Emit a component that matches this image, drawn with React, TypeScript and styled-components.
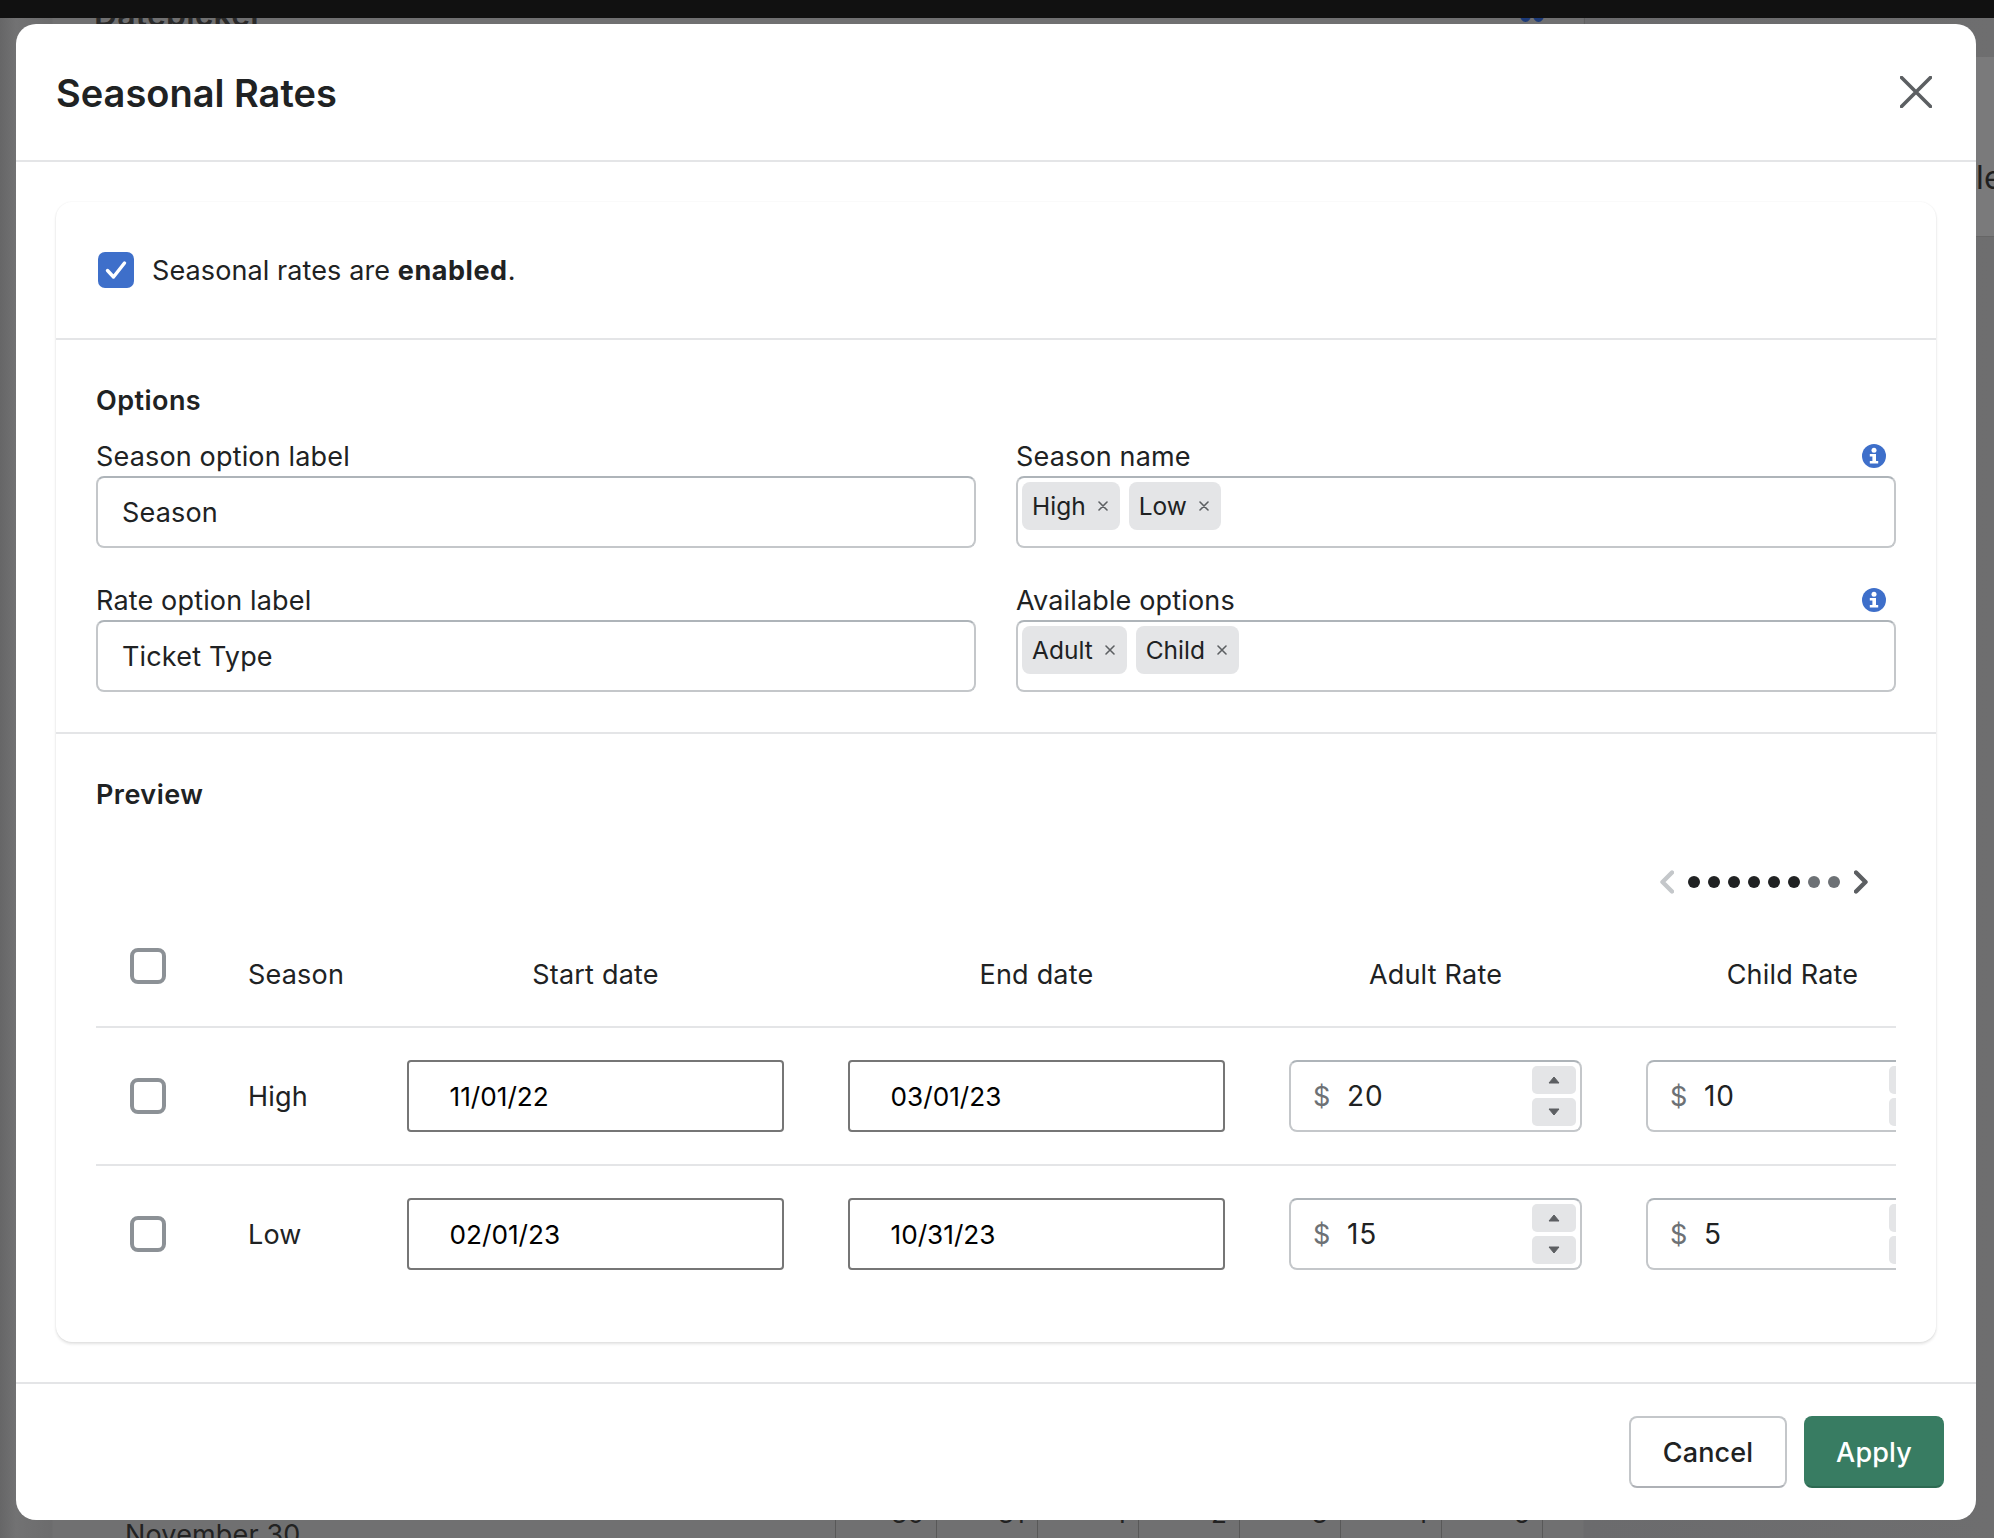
import React from "react";
import styled, { createGlobalStyle } from "styled-components";

const Global = createGlobalStyle`
  html, body { margin: 0; padding: 0; background: #6f6f70; }
  body { font-family: Inter, "Liberation Sans", sans-serif; color: #202223; letter-spacing: 0.16px; }
  * { box-sizing: border-box; }
`;

const Page = styled.div`
  width: 1994px;
  height: 1538px;
  display: flex;
  flex-direction: column;
  overflow: hidden;
`;
const TopBar = styled.div`
  height: 18px;
  background: #111111;
  position: relative;
  z-index: 3;
`;
const Stage = styled.div`
  flex: 1;
  min-height: 0;
  position: relative;
  display: flex;
  padding: 6px 18px 18px 16px;
  background: linear-gradient(90deg, #666667 0, #727273 16px, #6c6c6d 52px, #707071 53px, #707071 1583px, #6b6b6d 1584px, #6e6e6f 100%);
`;

/* Dimmed page behind the dialog */
const GhostHeading = styled.div`
  position: absolute;
  left: 94px;
  top: -23px;
  font-size: 32px;
  line-height: 40px;
  font-weight: 600;
  color: #2a2a2a;
`;
const GhostDots = styled.div`
  position: absolute;
  left: 1520px;
  top: -10px;
  display: flex;
  gap: 2px;
  & > i { width: 11px; height: 14px; border-radius: 50%; background: #1c3a78; display: block; }
`;
const GhostLine = styled.div`
  position: absolute;
  left: 1584px;
  top: 0;
  width: 1px;
  height: 6px;
  background: #606060;
`;
const GhostPanel = styled.div`
  position: absolute;
  right: 0;
  top: 39px;
  width: 18px;
  height: 180px;
  background: #7a7a7b;
  border-bottom: 1px solid #666;
  font-size: 32px;
  line-height: 38px;
  color: #1f1f1f;
  overflow: hidden;
  white-space: nowrap;
  padding-top: 102px;
`;
const GhostMonth = styled.div`
  position: absolute;
  left: 125px;
  top: 1500px;
  font-size: 27px;
  line-height: 34px;
  color: #222;
  white-space: nowrap;
`;
const GhostCalendar = styled.div`
  position: absolute;
  left: 835px;
  bottom: 0;
  height: 40px;
  display: flex;
  border-left: 1px solid #585858;
`;
const GhostDay = styled.div`
  width: 101px;
  height: 40px;
  border-right: 1px solid #585858;
  padding: 3px 12px 0 0;
  text-align: right;
  font-size: 26px;
  line-height: 26px;
  color: #222;
`;

/* Dialog */
const Modal = styled.div`
  position: relative;
  z-index: 1;
  flex: 1;
  display: flex;
  flex-direction: column;
  background: #fff;
  border-radius: 20px;
`;
const ModalHeader = styled.div`
  height: 138px;
  flex: none;
  display: flex;
  align-items: center;
  justify-content: space-between;
  padding: 0 44px 0 40px;
  border-bottom: 2px solid #e4e5e7;
`;
const Title = styled.h2`
  margin: 2px 0 0;
  font-size: 38px;
  line-height: 44px;
  font-weight: 600;
  letter-spacing: 0;
  color: #202223;
`;
const CloseButton = styled.div`
  width: 32px;
  height: 32px;
  margin-bottom: 1px;
  display: flex;
`;
const ModalBody = styled.div`
  flex: 1;
  padding: 40px;
`;
const Card = styled.div`
  height: 1140px;
  background: #fff;
  border-radius: 16px;
  box-shadow: 0 0 2px rgba(23, 24, 24, 0.07), 0 2px 3px rgba(23, 24, 24, 0.12);
  display: flex;
  flex-direction: column;
`;
const Section = styled.div<{ $h: number }>`
  height: ${(p) => p.$h}px;
  padding: 0 40px;
  flex: none;
  & + & { border-top: 2px solid #e4e5e7; }
`;
const EnableRow = styled.div`
  height: 136px;
  display: flex;
  align-items: center;
  gap: 18px;
  font-size: 27px;
  margin-left: 2px;
`;
const EnableText = styled.span`
  letter-spacing: 0.1px;
  & > b { letter-spacing: 0.55px; }
`;
const CheckOn = styled.div`
  width: 36px;
  height: 36px;
  border-radius: 7px;
  background: #3e6fca;
  display: flex;
  align-items: center;
  justify-content: center;
`;
const CheckOff = styled.div`
  width: 36px;
  height: 36px;
  border-radius: 8px;
  border: 4px solid #8c9196;
  background: #fff;
  margin-left: 34px;
`;
const SectionTitle = styled.div<{ $top: number }>`
  margin-top: ${(p) => p.$top}px;
  font-size: 27px;
  line-height: 32px;
  font-weight: 600;
  letter-spacing: 0.45px;
`;
const OptionsGrid = styled.div`
  display: grid;
  grid-template-columns: 880px 880px;
  column-gap: 40px;
  row-gap: 32px;
  margin-top: 19px;
`;
const Field = styled.div`
  display: flex;
  flex-direction: column;
`;
const FieldLabel = styled.div`
  height: 40px;
  display: flex;
  align-items: center;
  justify-content: space-between;
  font-size: 27px;
  padding-right: 10px;
`;
const TextBox = styled.div`
  height: 72px;
  border: 2px solid #c4c7ca;
  border-top-color: #aeb4b9;
  border-radius: 8px;
  display: flex;
  align-items: center;
  padding-left: 24px;
  font-size: 27px;
`;
const TagBox = styled(TextBox)`
  align-items: flex-start;
  padding: 4px 0 0 4px;
  gap: 9px;
`;
const Tag = styled.div`
  height: 48px;
  background: #e4e5e7;
  border-radius: 8px;
  display: flex;
  align-items: center;
  gap: 11px;
  padding: 0 11px 0 10px;
  font-size: 24.5px;
  letter-spacing: 0;
  color: #202223;
`;
const Pager = styled.div`
  height: 24px;
  margin: 59px 28px 0 0;
  display: flex;
  align-items: center;
  justify-content: flex-end;
  gap: 14px;
`;
const Dots = styled.div`
  display: flex;
  gap: 8px;
`;
const Dot = styled.div<{ $muted?: boolean }>`
  width: 12px;
  height: 12px;
  border-radius: 50%;
  background: ${(p) => (p.$muted ? "#6d7175" : "#202223")};
`;
const Scroller = styled.div`
  width: 1800px;
  overflow: hidden;
`;
const Row = styled.div<{ $h: number; $head?: boolean }>`
  display: grid;
  width: 1843px;
  grid-template-columns: 88px 95px 377px 377px 293px 293px;
  column-gap: 64px;
  height: ${(p) => p.$h}px;
  align-items: ${(p) => (p.$head ? "start" : "center")};
`;
const Rule = styled.div`
  height: 2px;
  background: #e4e5e7;
`;
const HeadCheck = styled(CheckOff)`
  margin-top: 54px;
`;
const RowCheck = styled(CheckOff)``;
const HeadCell = styled.div<{ $center?: boolean }>`
  margin-top: 64px;
  line-height: 34px;
  font-size: 27px;
  letter-spacing: 0.2px;
  text-align: ${(p) => (p.$center ? "center" : "left")};
`;
const Cell = styled.div`
  font-size: 27px;
`;
const DateBox = styled.div`
  height: 72px;
  border: 2px solid #767676;
  border-radius: 4px;
  display: flex;
  align-items: center;
  padding-left: 40.5px;
  font-size: 26.2px;
  letter-spacing: 0;
  color: #000;
`;
const MoneyBox = styled.div`
  height: 72px;
  border: 2px solid #c4c7ca;
  border-top-color: #aeb4b9;
  border-radius: 8px;
  display: flex;
  align-items: center;
  padding: 0 4px 0 22px;
  font-size: 27px;
`;
const Prefix = styled.span`
  color: #6d7175;
  width: 34px;
`;
const Amount = styled.span`
  flex: 1;
  font-size: 28px;
  letter-spacing: 0.8px;
`;
const Spinner = styled.div`
  width: 44px;
  display: flex;
  flex-direction: column;
  gap: 4px;
`;
const SpinButton = styled.div`
  height: 28px;
  background: #e4e5e7;
  border-radius: 5px;
  display: flex;
  align-items: center;
  justify-content: center;
`;
const ModalFooter = styled.div`
  flex: 1;
  border-top: 2px solid #e4e5e7;
  display: flex;
  justify-content: flex-end;
  gap: 17px;
  padding: 32px 32px 0 0;
`;
const Button = styled.div<{ $primary?: boolean }>`
  height: 72px;
  border-radius: 8px;
  display: flex;
  align-items: center;
  justify-content: center;
  font-size: 27px;
  font-weight: 500;
  width: ${(p) => (p.$primary ? 140 : 158)}px;
  background: ${(p) => (p.$primary ? "#387c62" : "#fff")};
  color: ${(p) => (p.$primary ? "#fff" : "#202223")};
  border: 2px solid ${(p) => (p.$primary ? "#387c62" : "#c4c7ca")};
  border-bottom-color: ${(p) => (p.$primary ? "#2d6a52" : "#aeb1b6")};
`;

const Check = () => (
  <svg width="24" height="24" viewBox="0 0 24 24" fill="none">
    <path d="M3.5 12.5 L9.5 19 L20.5 5" stroke="#fff" strokeWidth="3.4" strokeLinecap="round" strokeLinejoin="round" />
  </svg>
);
const Close = () => (
  <svg width="32" height="32" viewBox="0 0 32 32" fill="none">
    <path d="M1.5 1.5 L30.5 30.5 M30.5 1.5 L1.5 30.5" stroke="#5c5f62" strokeWidth="3.6" strokeLinecap="round" />
  </svg>
);
const Info = () => (
  <svg width="24" height="24" viewBox="0 0 24 24">
    <circle cx="12" cy="12" r="12" fill="#3e6fca" />
    <circle cx="12" cy="6.2" r="2.5" fill="#fff" />
    <path d="M7.8 10 H14 V17 H16.2 V19.6 H7.8 V17 H10.4 V12.6 H7.8 Z" fill="#fff" />
  </svg>
);
const TagX = () => (
  <svg width="12" height="12" viewBox="0 0 12 12" fill="none">
    <path d="M2 2 L10 10 M10 2 L2 10" stroke="#5c5f62" strokeWidth="1.6" strokeLinecap="round" />
  </svg>
);
const Chevron = ({ dir, color }: { dir: "l" | "r"; color: string }) => (
  <svg width="14" height="24" viewBox="0 0 14 24" fill="none">
    <path
      d={dir === "l" ? "M12 2.5 L2.5 12 L12 21.5" : "M2 2.5 L11.5 12 L2 21.5"}
      stroke={color}
      strokeWidth="4.4"
      strokeLinecap="round"
      strokeLinejoin="round"
    />
  </svg>
);
const Tri = ({ up }: { up?: boolean }) => (
  <svg width="12" height="8" viewBox="0 0 12 8">
    <path d={up ? "M6 1 L11 7 H1 Z" : "M6 7 L11 1 H1 Z"} fill="#5c5f62" stroke="#5c5f62" strokeLinejoin="round" />
  </svg>
);

const Money = ({ value }: { value: string }) => (
  <MoneyBox>
    <Prefix>$</Prefix>
    <Amount>{value}</Amount>
    <Spinner>
      <SpinButton><Tri up /></SpinButton>
      <SpinButton><Tri /></SpinButton>
    </Spinner>
  </MoneyBox>
);

const seasons = [
  { name: "High", start: "11/01/22", end: "03/01/23", adult: "20", child: "10" },
  { name: "Low", start: "02/01/23", end: "10/31/23", adult: "15", child: "5" },
];
const days = ["30", "31", "1", "2", "3", "4", "5"];

export default function App() {
  return (
    <Page>
      <Global />
      <TopBar />
      <Stage>
        <GhostHeading>Datepicker</GhostHeading>
        <GhostDots><i /><i /></GhostDots>
        <GhostLine />
        <GhostPanel>le</GhostPanel>
        <GhostMonth>November 30</GhostMonth>
        <GhostCalendar>
          {days.map((d) => <GhostDay key={d}>{d}</GhostDay>)}
        </GhostCalendar>
        <Modal>
          <ModalHeader>
            <Title>Seasonal Rates</Title>
            <CloseButton><Close /></CloseButton>
          </ModalHeader>
          <ModalBody>
            <Card>
              <Section $h={136}>
                <EnableRow>
                  <CheckOn><Check /></CheckOn>
                  <EnableText>Seasonal rates are <b>enabled</b>.</EnableText>
                </EnableRow>
              </Section>
              <Section $h={394}>
                <SectionTitle $top={45}>Options</SectionTitle>
                <OptionsGrid>
                  <Field>
                    <FieldLabel>Season option label</FieldLabel>
                    <TextBox>Season</TextBox>
                  </Field>
                  <Field>
                    <FieldLabel>Season name <Info /></FieldLabel>
                    <TagBox>
                      <Tag>High <TagX /></Tag>
                      <Tag>Low <TagX /></Tag>
                    </TagBox>
                  </Field>
                  <Field>
                    <FieldLabel>Rate option label</FieldLabel>
                    <TextBox>Ticket Type</TextBox>
                  </Field>
                  <Field>
                    <FieldLabel>Available options <Info /></FieldLabel>
                    <TagBox>
                      <Tag>Adult <TagX /></Tag>
                      <Tag>Child <TagX /></Tag>
                    </TagBox>
                  </Field>
                </OptionsGrid>
              </Section>
              <Section $h={610}>
                <SectionTitle $top={45}>Preview</SectionTitle>
                <Pager>
                  <Chevron dir="l" color="#c4c7ca" />
                  <Dots>
                    {[0, 1, 2, 3, 4, 5, 6, 7].map((i) => <Dot key={i} $muted={i > 5} />)}
                  </Dots>
                  <Chevron dir="r" color="#5c5f62" />
                </Pager>
                <Scroller>
                  <Row $h={132} $head>
                    <HeadCheck />
                    <HeadCell>Season</HeadCell>
                    <HeadCell $center>Start date</HeadCell>
                    <HeadCell $center>End date</HeadCell>
                    <HeadCell $center>Adult Rate</HeadCell>
                    <HeadCell $center>Child Rate</HeadCell>
                  </Row>
                  {seasons.map((s) => (
                    <React.Fragment key={s.name}>
                      <Rule />
                      <Row $h={136}>
                        <RowCheck />
                        <Cell>{s.name}</Cell>
                        <DateBox>{s.start}</DateBox>
                        <DateBox>{s.end}</DateBox>
                        <Money value={s.adult} />
                        <Money value={s.child} />
                      </Row>
                    </React.Fragment>
                  ))}
                </Scroller>
              </Section>
            </Card>
          </ModalBody>
          <ModalFooter>
            <Button>Cancel</Button>
            <Button $primary>Apply</Button>
          </ModalFooter>
        </Modal>
      </Stage>
    </Page>
  );
}
